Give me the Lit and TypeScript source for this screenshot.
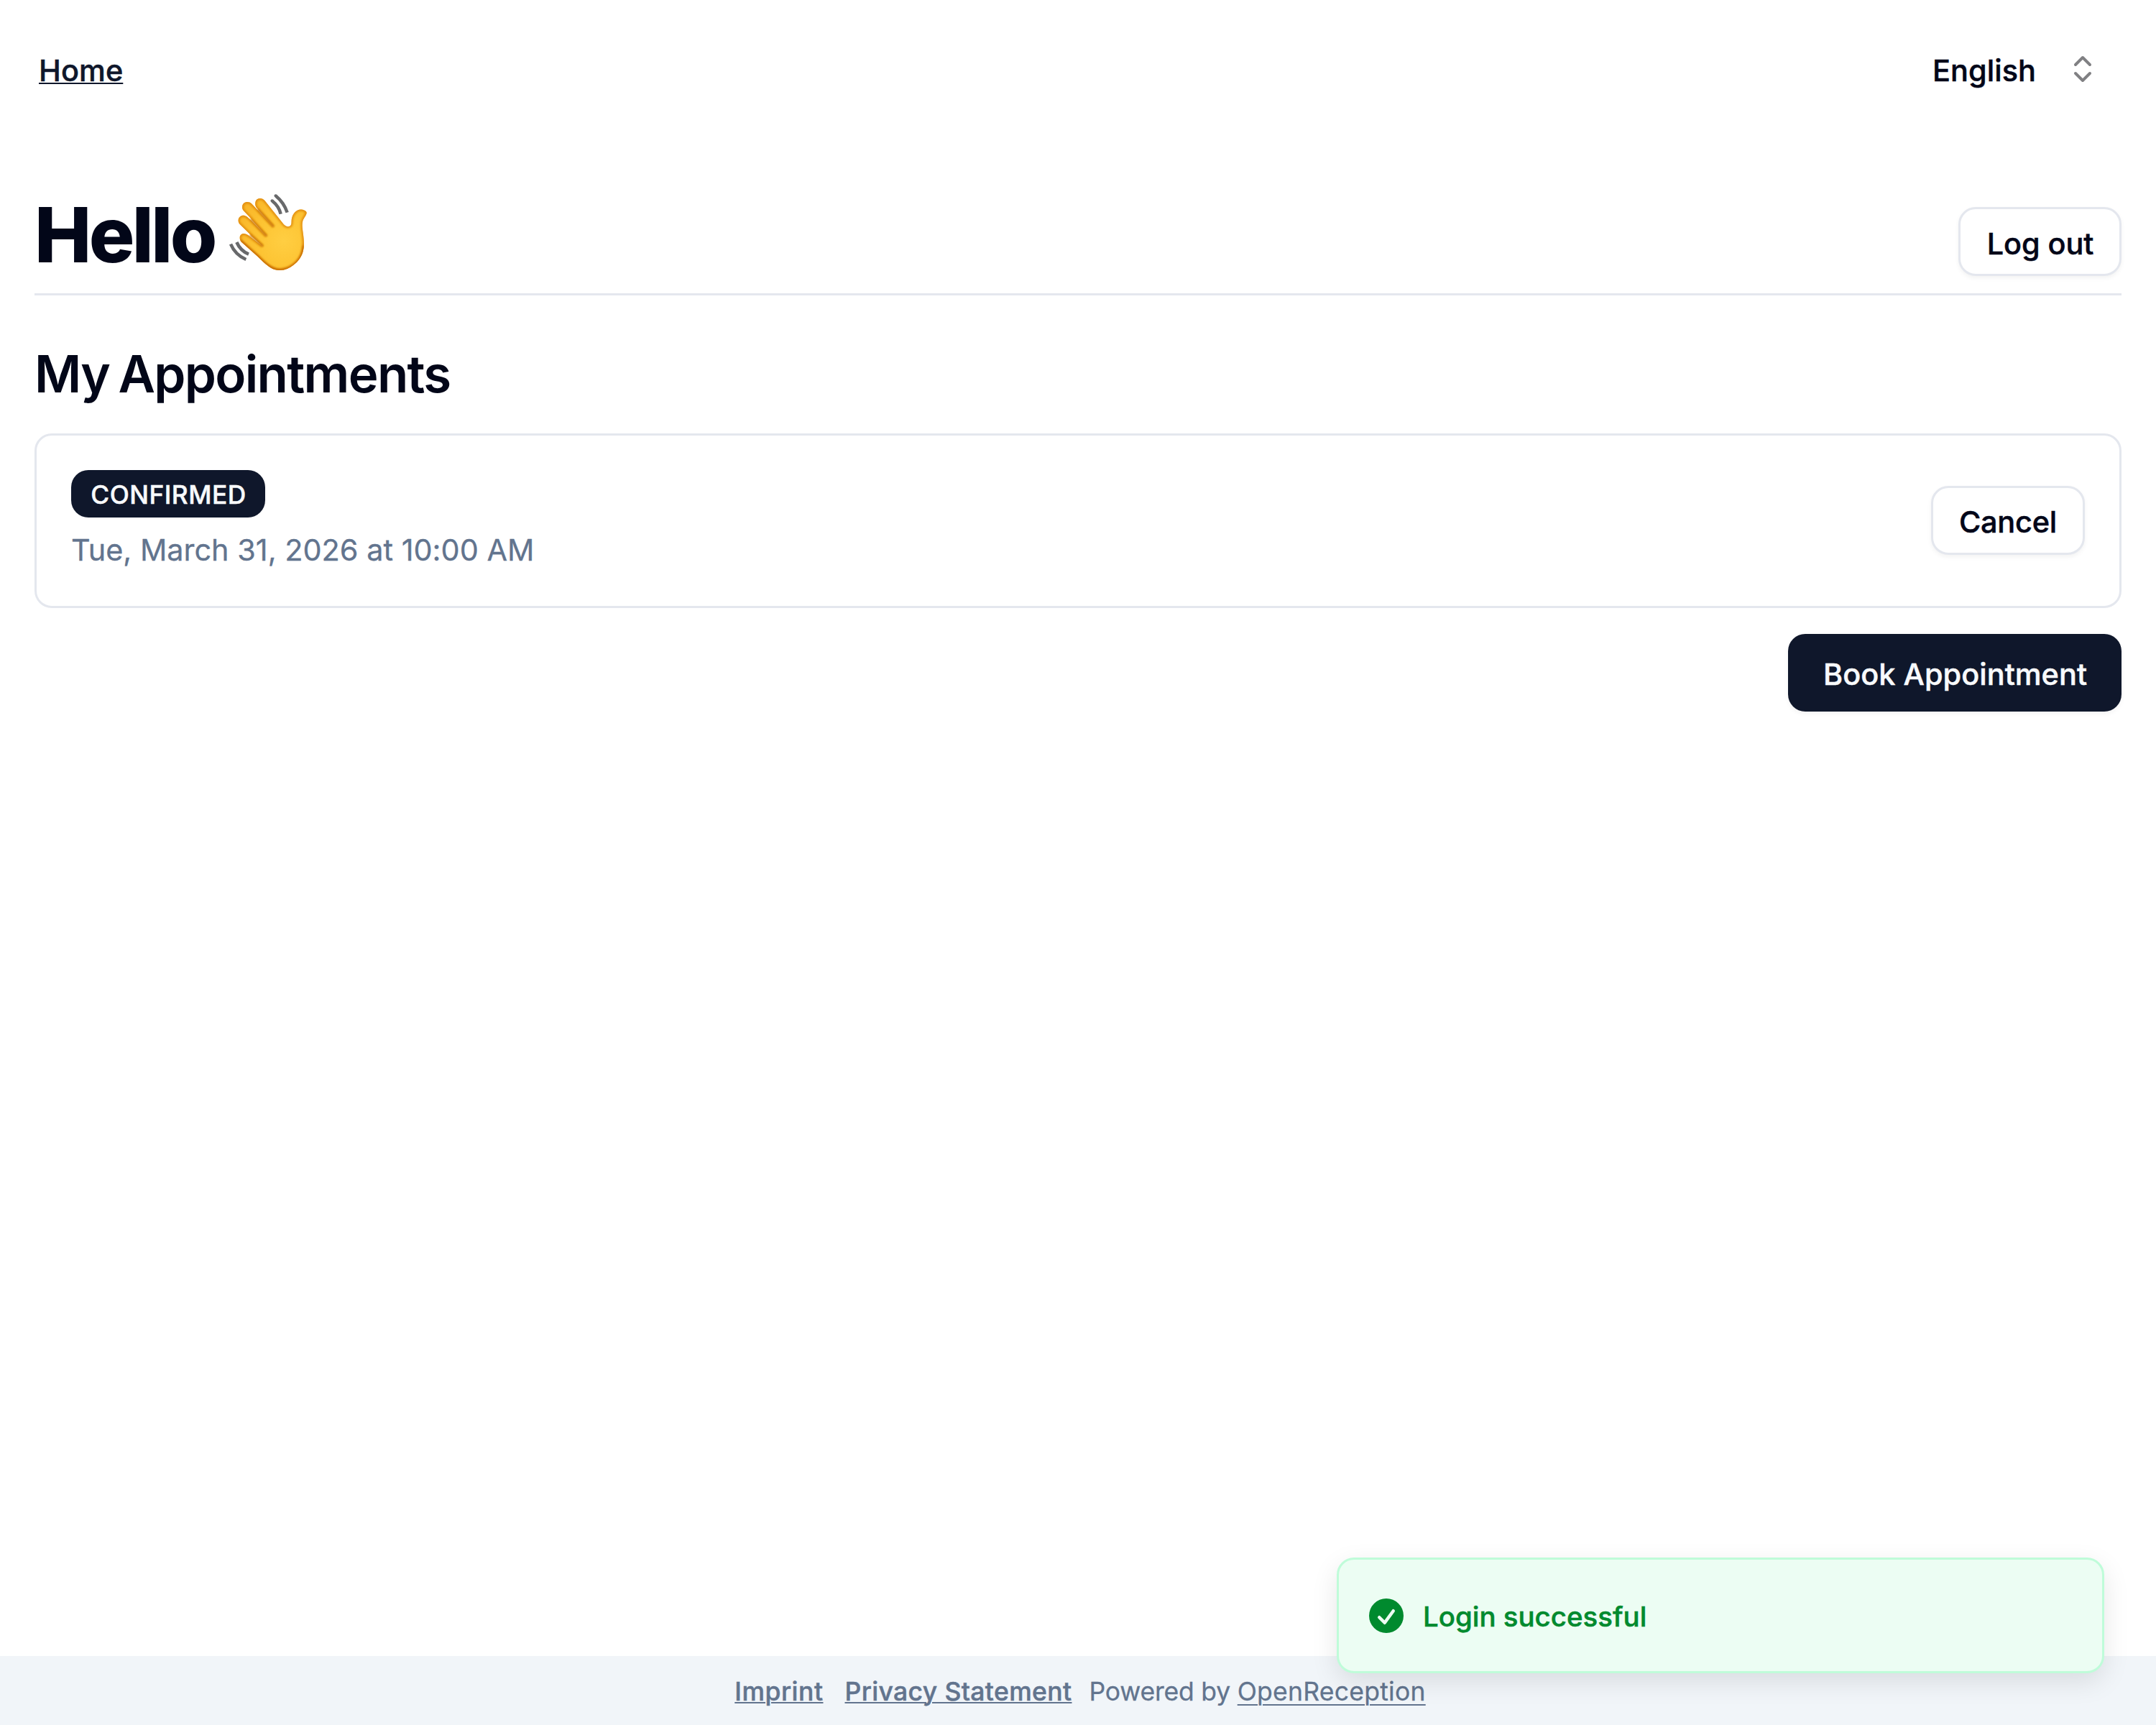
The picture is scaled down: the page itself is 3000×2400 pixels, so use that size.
import { LitElement, html, css, svg } from "lit";
import { customElement, property } from "lit/decorators.js";

const HAND =
  "M101 212C101 201 109 194 119 195C128 196 134 200 142 206L196 248L140 194L101 156C93 147 92 133 101 125C110 117 121 118 130 124L142 134L212 206L142 126L117 100C109 91 109 77 117 69C126 61 141 61 150 70L174 95L242 167L171 87C163 77 164 59 173 52C184 45 196 47 205 57L262 128L284 156C292 165 303 169 312 162C319 156 315 144 318 131C322 112 335 98 349 95C364 93 378 99 380 107C381 117 368 129 364 142C359 160 364 180 366 200C369 225 371 242 366 264C361 290 345 312 325 326C308 340 290 347 270 348C250 348 236 342 222 332C204 319 192 307 176 291L108 230C103 225 101 219 101 212Z";

@customElement("wave-icon")
class WaveIcon extends LitElement {
  static styles = css`
    :host { display: block; width: 150px; height: 130px; }
    svg { display: block; width: 100%; height: 100%; overflow: visible; }
  `;
  render() {
    return html`${svg`<svg viewBox="0 0 450 390" fill="none" aria-hidden="true">
      <defs>
        <clipPath id="hand"><path d=${HAND} /></clipPath>
        <radialGradient id="skin" gradientUnits="userSpaceOnUse" cx="285" cy="225" r="220">
          <stop offset="0" stop-color="#ffce42" />
          <stop offset="0.5" stop-color="#fdc433" />
          <stop offset="1" stop-color="#f9b529" />
        </radialGradient>
        <filter id="soft" x="-20%" y="-20%" width="140%" height="140%"><feGaussianBlur stdDeviation="5" /></filter>
        <filter id="fine" x="-20%" y="-20%" width="140%" height="140%"><feGaussianBlur stdDeviation="2.6" /></filter>
      </defs>
      <path d=${HAND} fill="url(#skin)" />
      <g clip-path="url(#hand)">
        <path d=${HAND} stroke="#e08a10" stroke-width="12" filter="url(#soft)" />
        <path d="M103 226L176 292C204 321 232 349 272 349C330 345 366 300 369 245" stroke="#c56a06" stroke-width="12" filter="url(#soft)" />
      </g>
      <g stroke="#cf7f12" stroke-width="8" stroke-linecap="round" filter="url(#fine)">
        <path d="M146 202L196 245" /><path d="M148 137L211 203" /><path d="M178 96L240 163" />
      </g>
      <g stroke="#68696b" stroke-width="13.5">
        <path d="M252 38Q286 66 299 107" /><path d="M237 59Q264 80 272 113" />
        <path d="M63 239Q82 284 127 303" /><path d="M88 231Q103 266 138 281" />
      </g>
      <circle cx="251" cy="37" r="6.5" fill="#68696b" /><circle cx="236" cy="58" r="6.5" fill="#68696b" />
    </svg>`}`;
  }
}

@customElement("login-toast")
class LoginToast extends LitElement {
  @property() message = "";
  static styles = css`
    :host {
      box-sizing: border-box;
      display: flex;
      align-items: center;
      width: 1068px;
      height: 161px;
      padding-left: 36px;
      border: 3px solid #bffcd9;
      border-radius: 24px;
      background: #ecfdf3;
      color: #008a2e;
      box-shadow: 0 12px 36px rgba(0, 0, 0, 0.1);
    }
    svg { width: 60px; height: 60px; flex: none; margin-top: 1px; }
    .message {
      margin-left: 21px;
      padding-top: 3px;
      font-size: 38.4px;
      font-weight: 500;
      line-height: 57px;
      letter-spacing: 0.02px;
      -webkit-text-stroke: 0.5px currentColor;
    }
  `;
  render() {
    return html`
      <svg viewBox="0 0 20 20" fill="currentColor">
        <path fill-rule="evenodd" clip-rule="evenodd" d="M10 18a8 8 0 100-16 8 8 0 000 16zm3.857-9.809a.75.75 0 00-1.214-.882l-3.483 4.79-1.88-1.88a.75.75 0 10-1.06 1.061l2.5 2.5a.75.75 0 001.137-.089l4-5.5z" />
      </svg>
      <div class="message">${this.message}</div>
    `;
  }
}

@customElement("app-root")
class AppRoot extends LitElement {
  static styles = css`
    :host {
      box-sizing: border-box;
      position: relative;
      display: flex;
      flex-direction: column;
      width: 100%;
      height: 2400px;
      overflow: hidden;
      background: #fff;
      color: #020618;
      font-family: Inter, "Liberation Sans", sans-serif;
      font-size: 41.4px;
      font-weight: 500;
      white-space: nowrap;
      font-kerning: normal;
    }
    * { box-sizing: border-box; }
    main { flex: 1; padding: 48px 48px 0; }
    nav { display: flex; align-items: center; justify-content: space-between; height: 96px; }
    nav, button, .badge, .imprint, .privacy { -webkit-text-stroke: 0.5px currentColor; }
    a { color: inherit; text-decoration: underline; text-decoration-thickness: 2px; }
    .home { margin-left: 6px; padding-top: 4px; color: #0f172b; letter-spacing: 0.1px; text-underline-offset: 2px; }
    .language { display: flex; align-items: center; gap: 41px; padding-right: 30px; }
    .language span { padding-top: 4px; letter-spacing: 0.05px; }
    .language svg { width: 48px; height: 48px; color: #808083; }
    .title {
      display: flex;
      align-items: flex-end;
      height: 151px;
      margin-top: 116px;
      padding-bottom: 24px;
      border-bottom: 3px solid #e4e7ee;
    }
    h1 { margin: 0; width: 252px; font-size: 106px; font-weight: 800; line-height: 115px; letter-spacing: -3.6px; }
    wave-icon { margin-bottom: -6px; }
    button {
      height: 96px;
      margin: 0;
      padding: 3px 0 0;
      border: 3px solid #e4e7ee;
      border-radius: 24px;
      background: #fff;
      color: inherit;
      font: inherit;
      box-shadow: 0 3px 6px rgba(0, 0, 0, 0.05);
    }
    .logout { width: 227px; margin-left: auto; padding: 5px 0 0 1px; letter-spacing: -0.08px; }
    h2 { margin: 61px 0 35px; font-size: 70.8px; font-weight: 600; line-height: 96px; letter-spacing: -1.66px; word-spacing: -4px; }
    .card {
      display: flex;
      align-items: center;
      justify-content: space-between;
      height: 243px;
      padding: 48px;
      border: 3px solid #e4e7ee;
      border-radius: 24px;
    }
    .badge {
      display: flex;
      align-items: center;
      justify-content: center;
      width: 270px;
      height: 66px;
      padding: 2px 0 0 1px;
      border-radius: 24px;
      background: #0f172b;
      color: #f8fafc;
      font-size: 35.3px;
      letter-spacing: 0.5px;
    }
    .date { margin-top: 15px; padding-top: 1px; color: #62748e; font-weight: 400; line-height: 59px; letter-spacing: 0.01px; -webkit-text-stroke: 0.3px currentColor; }
    .cancel { width: 214px; margin-bottom: 1px; letter-spacing: -0.2px; }
    .actions { display: flex; justify-content: flex-end; margin-top: 36px; }
    .book { width: 464px; height: 108px; padding: 4px 0 0 1px; border: 0; background: #0f172b; color: #f8fafc; letter-spacing: 0.05px; }
    footer {
      display: flex;
      align-items: center;
      justify-content: center;
      height: 96px;
      padding: 2px 0 0 6px;
      background: #f1f5f9;
      color: #62748e;
      font-size: 35.5px;
    }
    .imprint { margin-right: 30px; letter-spacing: 0.5px; text-underline-offset: 2px; }
    .privacy { margin-right: 24px; letter-spacing: 0.37px; text-underline-offset: 2px; }
    .powered { font-weight: 400; letter-spacing: -0.2px; white-space: pre; -webkit-text-stroke: 0.3px currentColor; }
    .powered a { letter-spacing: 0.25px; text-underline-offset: 5px; }
    login-toast { position: absolute; right: 72px; bottom: 72px; }
  `;
  render() {
    return html`
      <main>
        <nav>
          <a class="home">Home</a>
          <div class="language">
            <span>English</span>
            <svg viewBox="0 0 24 24" fill="none" stroke="currentColor" stroke-width="2" stroke-linecap="round" stroke-linejoin="round">
              <path d="m7 15 5 5 5-5" /><path d="m7 9 5-5 5 5" />
            </svg>
          </div>
        </nav>
        <div class="title">
          <h1>Hello</h1>
          <wave-icon></wave-icon>
          <button class="logout">Log out</button>
        </div>
        <h2>My Appointments</h2>
        <section class="card">
          <div>
            <div class="badge">CONFIRMED</div>
            <div class="date">Tue, March 31, 2026 at 10:00 AM</div>
          </div>
          <button class="cancel">Cancel</button>
        </section>
        <div class="actions"><button class="book">Book Appointment</button></div>
      </main>
      <footer>
        <a class="imprint">Imprint</a>
        <a class="privacy">Privacy Statement</a>
        <span class="powered">Powered by <a>OpenReception</a></span>
      </footer>
      <login-toast message="Login successful"></login-toast>
    `;
  }
}
